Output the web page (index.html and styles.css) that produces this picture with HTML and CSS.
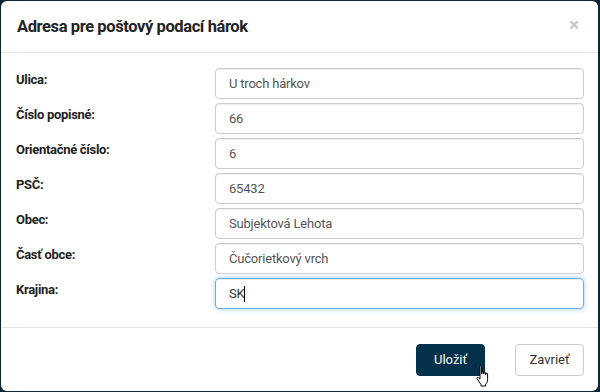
FILE: index.html
```html
<!DOCTYPE html>
<html lang="sk">
<head>
    <meta charset="UTF-8">
    <meta name="viewport" content="width=device-width, initial-scale=1.0">
    <title>Adresa pre poštový podací hárok</title>
    <link rel="stylesheet" href="styles.css">
</head>
<body>

<div class="modal">
    <div class="modal-header">
        <h4>Adresa pre poštový podací hárok</h4>
        <span class="close">&times;</span>
    </div>
    <form class="modal-body">
        <div class="row">
            <label for="ulica">Ulica:</label>
            <input id="ulica" type="text" value="U troch hárkov">
        </div>
        <div class="row">
            <label for="cp">Číslo popisné:</label>
            <input id="cp" type="text" value="66">
        </div>
        <div class="row">
            <label for="co">Orientačné číslo:</label>
            <input id="co" type="text" value="6">
        </div>
        <div class="row">
            <label for="psc">PSČ:</label>
            <input id="psc" type="text" value="65432">
        </div>
        <div class="row">
            <label for="obec">Obec:</label>
            <input id="obec" type="text" value="Subjektová Lehota">
        </div>
        <div class="row">
            <label for="cast">Časť obce:</label>
            <input id="cast" type="text" value="Čučorietkový vrch">
        </div>
        <div class="row">
            <label for="krajina">Krajina:</label>
            <div class="input focus">SK<span class="caret"></span></div>
        </div>
    </form>
    <div class="modal-footer">
        <button class="btn btn-primary">Uložiť
            <svg class="cursor" width="18" height="24" viewBox="0 0 18 24">
                <path d="M5 2.5c0-1 1.6-1 1.6 0v7.5h.4V8c0-1 1.6-1 1.6 0v2h.4V9c0-1 1.6-1 1.6 0v1.5h.4v-.7c0-1 1.6-1 1.6 0v5.7c0 2.4-1 3.6-2 5v1.5H6v-1.5L2.2 15c-.8-1 .2-2.2 1.2-1.4L5 15.2z" fill="#fff" stroke="#000" stroke-width="1" stroke-linejoin="round"/>
            </svg>
        </button>
        <button class="btn btn-default">Zavrieť</button>
    </div>
</div>

</body>
</html>
```

FILE: styles.css
```css
/* modal over a darkened page */
body {
    margin: 0;
    padding: 1px 0 0 1px;
    background-color: #0e2634;
    font-family: Roboto, "Liberation Sans", Arial, sans-serif;
    color: #333;
    height: 392px;
    box-sizing: border-box;
    overflow: hidden;
}
.modal {
    width: 597px;
    height: 390px;
    background-color: white;
    border-radius: 6px;
    display: flex;
    flex-direction: column;
}
.modal-header {
    height: 51px;
    border-bottom: 1px solid #e5e5e5;
    padding: 0 16px;
    display: flex;
    justify-content: space-between;
    align-items: center;
}
.modal-header h4 {
    margin: 0;
    font-size: 16.5px;
    font-weight: bold;
    color: #222;
    letter-spacing: -0.4px;
}
.close {
    font-size: 19px;
    color: #c8c8c8;
    font-weight: bold;
    margin-right: 3px;
    margin-top: -4px;
}
.modal-body {
    margin: 0;
    padding: 15px 14px 18px 15px;
    display: flex;
    flex-direction: column;
    gap: 4px;
    border-bottom: 1px solid #e5e5e5;
}
.row {
    display: flex;
    align-items: flex-start;
}
.row label {
    width: 199px;
    font-size: 13px;
    font-weight: bold;
    color: #222;
    padding-top: 4px;
    letter-spacing: -0.3px;
}
.row input,
.row .input {
    flex: 1;
    height: 31px;
    box-sizing: border-box;
    border: 1px solid #ccc;
    border-radius: 4px;
    padding: 0 13px;
    font-family: inherit;
    font-size: 13px;
    color: #555;
    letter-spacing: -0.2px;
    box-shadow: inset 0 1px 1px rgba(0, 0, 0, 0.075);
    outline: none;
}
.row .input {
    display: flex;
    align-items: center;
    color: #333;
}
.row .focus {
    border-color: #66afe9;
    box-shadow: inset 0 1px 1px rgba(0, 0, 0, 0.075), 0 0 5px rgba(102, 175, 233, 0.6);
}
.caret {
    display: inline-block;
    width: 1px;
    height: 16px;
    background-color: #000;
}
.modal-footer {
    flex: 1;
    padding: 0 14px 0 0;
    display: flex;
    justify-content: flex-end;
    align-items: center;
    gap: 30px;
}
.btn {
    height: 32px;
    width: 69px;
    border-radius: 4px;
    font-family: inherit;
    font-size: 13px;
    position: relative;
    padding: 0;
}
.btn-primary {
    background-color: #03304a;
    border: 1px solid #03304a;
    color: white;
}
.btn-default {
    background-color: white;
    border: 1px solid #ccc;
    color: #333;
}
.cursor {
    position: absolute;
    left: 58px;
    top: 19px;
}
```
